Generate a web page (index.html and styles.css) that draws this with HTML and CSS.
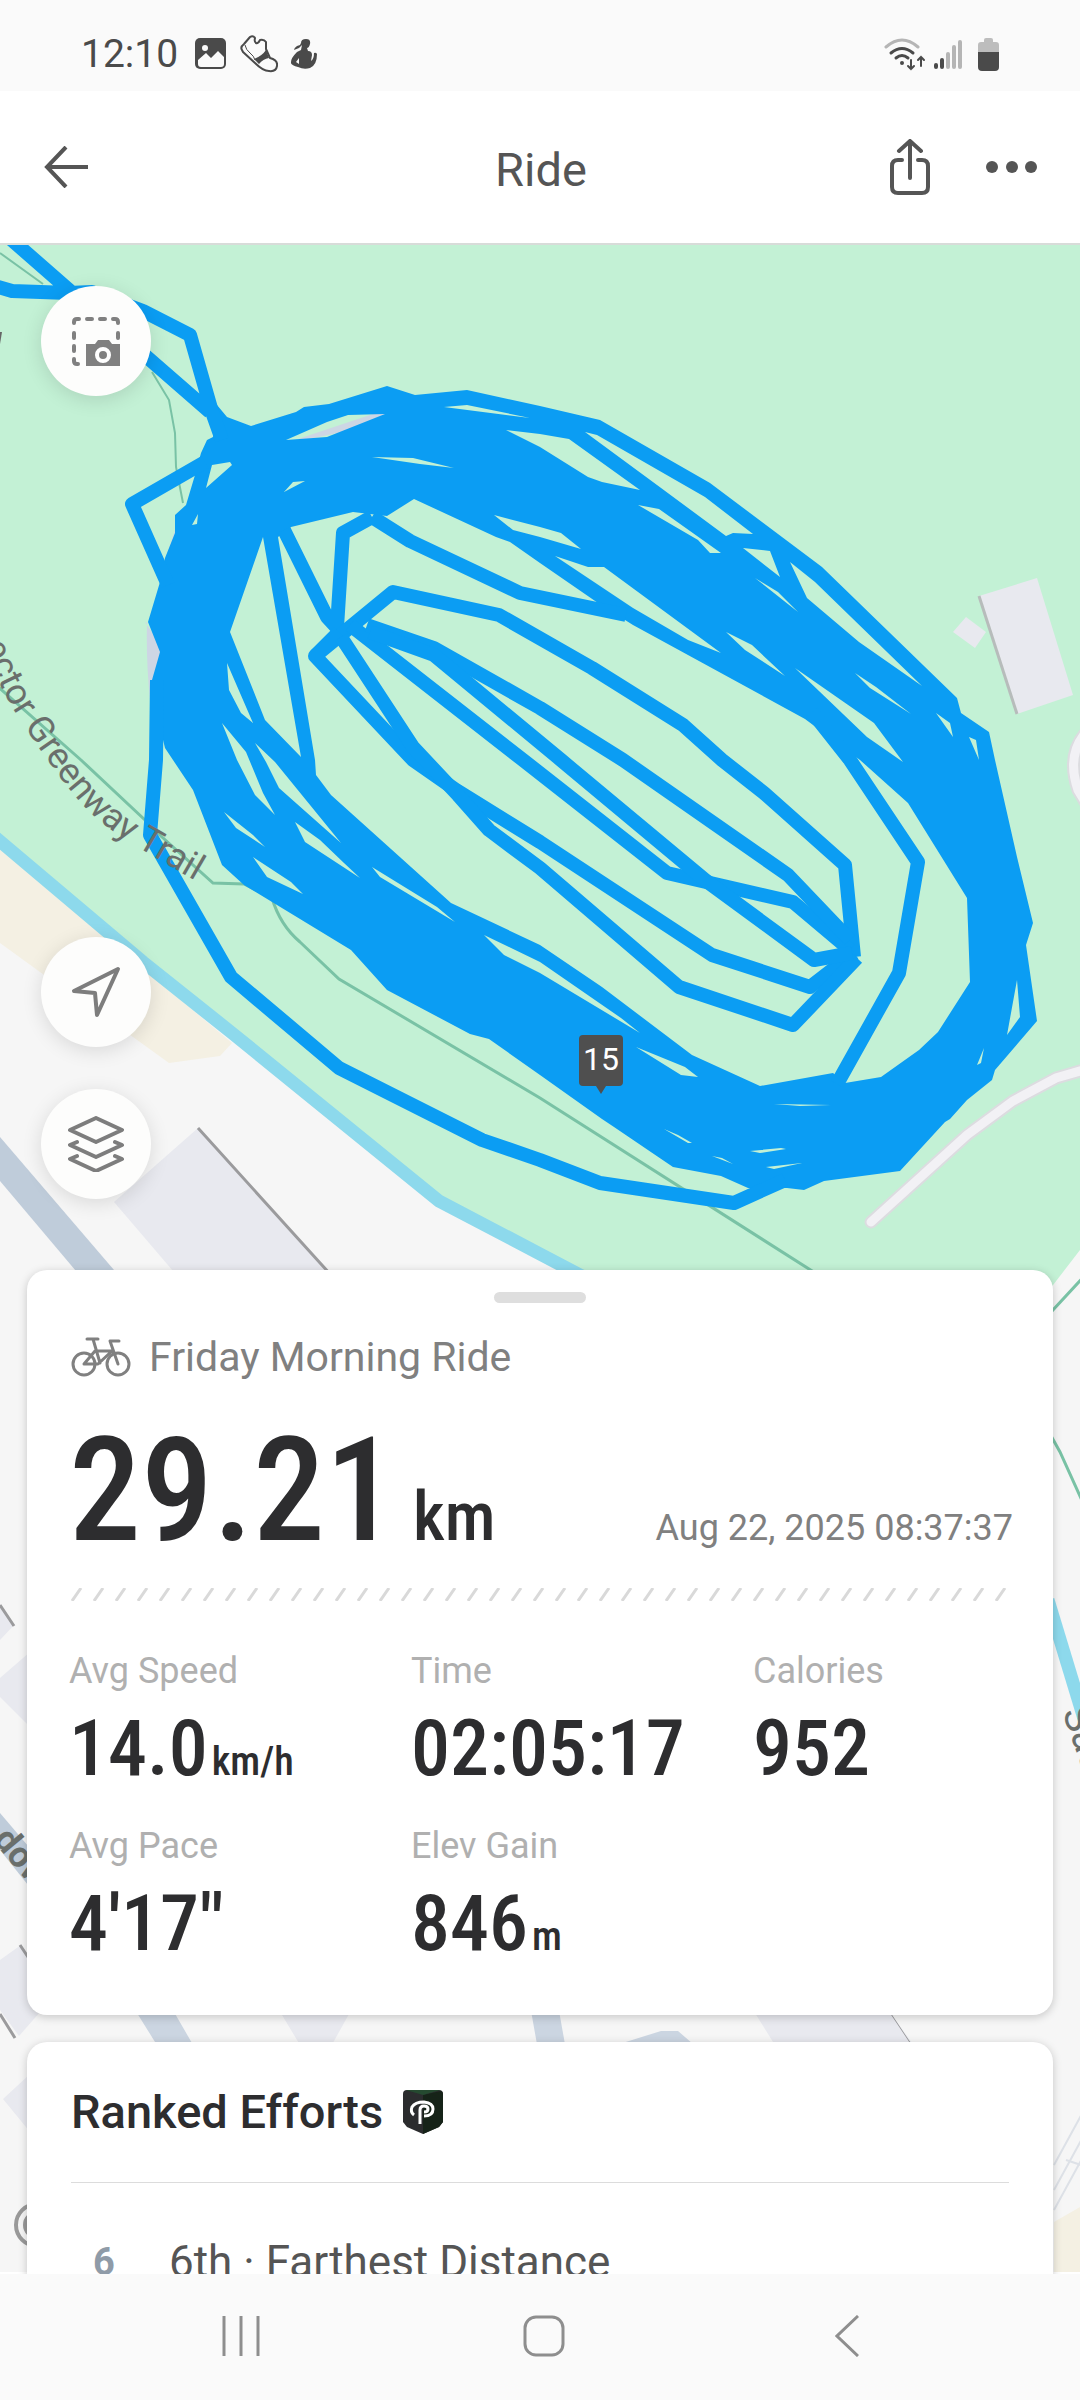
FILE: index.html
```html
<!DOCTYPE html>
<html lang="en">
<head>
  <meta charset="UTF-8" />
  <meta name="viewport" content="width=device-width, initial-scale=1.0" />
  <title>Ride</title>
  <link rel="stylesheet" href="styles.css">
</head>
<body>
  <div class="status-bar">
    <div class="status-left">
      <span class="clock">12:10</span>
      <svg width="32" height="32" viewBox="0 0 32 32">
        <rect width="31" height="31" y="0" rx="5" fill="#4a4a4a"/>
        <circle cx="10" cy="10" r="3" fill="#fafafa"/>
        <path d="M3 22l8-7 5 5 7-7 6 6v7q0 3-3 3H6q-3 0-3-3z" fill="#fafafa"/>
      </svg>
      <svg width="38" height="38" viewBox="0 0 38 38" fill="none" stroke="#4a4a4a" stroke-width="2" stroke-linejoin="round">
        <path d="M2 15q-2-3 2-6l6-7q3-2 5 1-1 4 1 5 2 1 4-3 4-1 6 2l0 7 4 9q8 2 7 8-1 6-8 5-6 0-14-8L3 17z"/>
        <path d="M5 10q1 5 5 8 4 3 5 7" stroke-width="1"/>
        <path d="M14 24q8-3 12-9l3 8q-6 1-10 6z" fill="#4a4a4a" stroke="none"/>
      </svg>
      <svg width="26" height="32" viewBox="0 0 26 32" fill="#4a4a4a">
        <path d="M10 5q0-4 5-4t4 5q-1 4-3 4l1 3q4 0 4 4l-1 6q3-2 3-8 2-1 3 1 0 11-7 14-6 2-12-1-8-2-7-5 0-4 6-10l4-2 1-5-3 3-5 2q0-2 3-4l3-1z"/>
        <path d="M5 24l3-4v6z" fill="#fafafa"/>
      </svg>
    </div>
    <div class="status-right">
      <svg width="42" height="36" viewBox="0 0 42 36" fill="none" stroke="#4a4a4a" stroke-width="3" stroke-linecap="round">
        <path d="M2 11q16-14 32 0" stroke="#b5b5b5"/>
        <path d="M7 17q11-9 22 0M12 22q6-5 12 0"/>
        <circle cx="18" cy="27" r="2" fill="#4a4a4a" stroke="none"/>
        <path d="M27 24v9m-3-3l3 3 3-3M37 30v-9m-3 3l3-3 3 3" stroke-width="2"/>
      </svg>
      <svg width="28" height="36" viewBox="0 0 28 36" stroke-width="4" stroke-linecap="round">
        <path d="M2 29v2M8 24v7" stroke="#4a4a4a"/>
        <path d="M14 18v13M20 11v20M26 6v25" stroke="#b5b5b5"/>
      </svg>
      <svg class="battery" width="21" height="36" viewBox="0 0 21 36">
        <path d="M0 16V9q0-3 3-3h3V4q0-2 2-2h5q2 0 2 2v2h3q3 0 3 3v7z" fill="#bdbdbd"/>
        <path d="M0 16h21v15q0 4-4 4H4q-4 0-4-4z" fill="#4a4a4a"/>
      </svg>
    </div>
  </div>

  <header>
    <button class="icon-btn" type="button" aria-label="Back">
      <svg width="44" height="42" viewBox="0 0 44 42" fill="none" stroke="#555" stroke-width="4"><path d="M22 1L3 21l19 20M3 21h41"/></svg>
    </button>
    <h1>Ride</h1>
    <div class="header-actions">
      <button class="icon-btn" type="button" aria-label="Share">
        <svg width="40" height="56" viewBox="0 0 40 56" fill="none" stroke="#555" stroke-width="4" stroke-linecap="round">
          <path d="M12 21H8q-6 0-6 6v21q0 6 6 6h24q6 0 6-6V27q0-6-6-6h-4M20 39V3M9 12L20 2l11 10"/>
        </svg>
      </button>
      <button class="icon-btn" type="button" aria-label="More">
        <svg width="52" height="12" viewBox="0 0 52 12" fill="#555"><circle cx="6" cy="6" r="6"/><circle cx="26" cy="6" r="6"/><circle cx="45" cy="6" r="6"/></svg>
      </button>
    </div>
  </header>

  <main>
    <svg class="map" viewBox="0 243 1080 2031" preserveAspectRatio="xMidYMin slice">
      <rect y="243" width="1080" height="2031" fill="#f6f6f6"/>

      <!-- park, sand and river -->
      <path d="M0 243H1080V1250L1030 1315H640L540 1254 439 1201 232 1033 143 962 0 841z" fill="#c3f1d5"/>
      <path d="M0 848L232 1043 220 1056 169 1063 133 1037 40 972 0 943zM1080 2207L1054 2222V2274H1080z" fill="#f4f0e3"/>
      <path d="M-5 837L143 962 232 1033 439 1201 540 1254 620 1296" fill="none" stroke="#8dd9ec" stroke-width="13"/>
      <path d="M1048 1600L1085 1722" fill="none" stroke="#8dd9ec" stroke-width="13"/>

      <!-- streets -->
      <g fill="#bfccda">
        <path d="M0 1137L114 1270 130 1290H92L0 1181z"/>
        <path d="M0 1813L40 1860V1900L0 1850z"/>
        <path d="M132 2005H170L196 2050H160zM530 2005H558L566 2050H538zM600 2050L661 2031H678L700 2050z" fill="#cbd5e1"/>
      </g>
      <path d="M871 1222L967 1135 1013 1101 1056 1078 1090 1068M1090 728Q1065 752 1078 790L1090 810" fill="none" stroke="#dcdce0" stroke-width="13" stroke-linecap="round"/>
      <path d="M871 1222L967 1135 1013 1101 1056 1078 1090 1068M1090 728Q1065 752 1078 790L1090 810" fill="none" stroke="#f2f1f5" stroke-width="9" stroke-linecap="round"/>
      <path d="M1054 2165L1084 2110M1054 2190L1084 2135M1054 2210L1084 2155M1066 2160L1084 2166" stroke="#dde1e7" stroke-width="2"/>

      <!-- buildings -->
      <g fill="#e8e9ef">
        <path d="M198 1128L340 1285H185L114 1202z"/>
        <path d="M979 596L1037 578 1073 695 1017 714zM966 617L986 632 975 648 953 632z"/>
        <path d="M0 1607L14 1625 0 1640zM0 1678L30 1652V1727L0 1697zM0 1960L21 1945 40 1975V2012L19 2036 0 2010z"/>
        <path d="M276 2005H354L329 2050H303zM750 2005H885L917 2050H778zM30 2074L3 2099 30 2132z"/>
      </g>
      <g fill="none" stroke="#9b9b9d" stroke-width="3">
        <path d="M198 1128L340 1285M0 1605L14 1626M20 1945L30 1960M0 2014L15 2038"/>
        <path d="M979 596L1017 714" stroke="#b7bcbb"/>
        <path d="M885 2005L915 2050" stroke-width="1"/>
      </g>

      <!-- walking paths -->
      <g fill="none" stroke="#79c2a5" stroke-width="3">
        <path d="M-5 684L81 760 145 820 162 837 213 883 244 884 272 898Q280 925 300 942L339 979 540 1098 820 1276"/>
        <path d="M1040 1324L1090 1270M1045 1425L1060 1452 1090 1518"/>
        <path d="M0 253L43 284M152 372L169 400 175 433 176 467 183 503" stroke-width="2"/>
      </g>

      <!-- recorded track -->
      <path d="M145 622L165 652 150 700Q146 660 147 623zM175 530L165 560 160 590 170 590zM280 445L400 405V420z" fill="#cdd6e4"/>
      <path fill="#0b9df3" fill-rule="evenodd" d="M217 405L227 417 251 426 296 412 304 407 329 404 387 386 415 395 467 390 540 406 600 420 710 483 822 567 957 698 961 713 989 732 995 760 1017 857 1033 923 1026 945 1037 1021 995 1070 992 1080 967 1100 950 1119 945 1122 900 1171 824 1181 804 1190 787 1188 748 1188 721 1176 673 1167 614 1127 602 1119 540 1075 489 1039 470 1034 387 990 351 950 244 885 222 865 193 790 165 748 150 687 160 652 148 622 160 582 165 558 175 533 175 515 186 505 195 475 201 453 207 440 213 437z
        M291 527L353 512 387 516 414 499 496 537 510 542 540 563 598 603 633 625 805 719 860 760 908 803 967 898 970 982 938 1032 919 1050 881 1077 845 1083 833 1073 760 1086 692 1055 602 987 540 945 451 903 331 795 316 775 315 760 278 537z
        M263 537L230 632 265 720 301 757z
        M227 663L229 690 241 713 253 723z
        M222 723L237 760 255 795 275 815 263 793 246 752z
        M255 743L266 762 279 788 341 843 275 762z
        M224 812L236 828 265 847 253 835z
        M253 857L267 877 303 894 291 882z
        M295 822L305 842 360 878 344 863 320 840z
        M372 867L380 877 455 922 437 907z
        M484 935L504 955 540 973 600 1009 640 1033 621 1018 540 962z
        M212 465L230 462 232 465 206 488z
        M192 525L198 514 197 524z
        M286 440L327 422 348 415 385 414 327 437z
        M284 492L293 482 305 481z
        M372 457L413 458 454 468 420 464z
        M444 407L467 405 530 418z
        M506 430L540 434 569 439 640 490 602 482 588 477 540 447z
        M585 432L597 435 705 497 753 534 733 533 726 536 657 485z
        M638 505L659 509 721 553 710 553 698 540z
        M743 548L770 551 780 577z
        M790 562L815 582 922 686 859 642 807 598z
        M755 578L778 592 798 612z
        M726 632L752 645 785 676 745 650z
        M795 668L874 723 903 762 867 737z
        M855 673L876 687 911 714 870 688z
        M936 713L950 723 953 737z
        M969 737L976 740 979 760z
        M494 515L540 527 561 533 581 549 540 537 513 530z
        M555 556L588 567 604 567 721 653 688 640 633 608z
        M1017 980L1020 1017 1007 1035z
        M636 1047L681 1075 698 1077 685 1067z
        M750 1151L781 1148 786 1149 760 1153z
        M766 1167L802 1163 774 1169z
        M664 1129L688 1143 692 1143 678 1135z
        M774 1104L831 1105 800 1106z
        M712 1156L733 1164 722 1158z
        M984 1048L981 1063 977 1065z"/>
      <g fill="none" stroke="#0b9df3" stroke-width="14" stroke-linejoin="round">
        <!-- way in from the north-west -->
        <path d="M5 234L69 290 148 358 210 412M-5 286L12 291 69 293 92 292 143 311 190 335 212 412 222 440"/>
        <!-- wide laps -->
        <path d="M205 462L132 504 168 585"/>
        <path d="M157 680L156 760 150 835 231 977 339 1068 482 1140 540 1160 600 1183 734 1203 785 1180"/>
        <path d="M812 712L850 760 918 862 899 973 837 1084"/>
        <path d="M372 517L410 541 520 593 626 615"/>
        <!-- inner laps -->
        <path d="M284 530L327 617 339 630M372 517L343 533 337 627"/>
        <path d="M315 656L393 592 499 615 592 668 683 725 722 760 764 793 845 865 854 957"/>
        <path d="M339 632L315 656 413 760 456 790 540 842 712 955 810 987 854 953"/>
        <path d="M341 637L413 747 458 795 489 830 540 868 679 987 793 1025 857 958"/>
        <path d="M350 625L523 760 667 873 793 902 850 950"/>
        <path d="M367 625L434 648 540 708 623 760 788 875 850 940"/>
        <path d="M370 632L434 655 561 760 705 880 814 960 852 953"/>
      </g>

      <path id="trail" d="M-50 540Q-16 664 17 715T75 796 139 848L199 883" fill="none"/>
      <g class="map-label">
        <text text-anchor="end"><textPath href="#trail" startOffset="99%">nnector Greenway Trail</textPath></text>
        <text class="river" transform="translate(1062 1712) rotate(70)">Sau</text>
        <text class="street" transform="translate(-8 1840) rotate(50)">dow</text>
      </g>
      <path d="M0 332L2 332 0 344z" fill="#666"/>
      <g fill="none" stroke="#999" stroke-width="4"><circle cx="37" cy="2225" r="21"/><circle cx="37" cy="2225" r="12"/></g>

      <!-- distance marker -->
      <path d="M583 1035h36q4 0 4 4v43q0 4-4 4h-13l-5 8-5-8h-13q-4 0-4-4v-43q0-4 4-4z" fill="#4f4f4f"/>
      <text class="marker" x="601" y="1070" text-anchor="middle">15</text>
    </svg>

    <div class="map-controls">
      <button class="round-btn snapshot" type="button" aria-label="Snapshot">
        <svg width="50" height="50" viewBox="0 0 50 50" fill="none" stroke="#808080" stroke-width="4" stroke-linecap="round">
          <path d="M3 7V6q0-3 3-3h2M16 3h5M29 3h5M42 3h2q3 0 3 3v1M3 17v5M3 30v5M3 43v2q0 3 3 3h1M47 17v5"/>
          <path d="M15 28h9l3-4h11l3 4h8v22H15z" fill="#808080" stroke="none"/>
          <circle cx="32" cy="39" r="6" fill="#808080" stroke="#fff"/>
        </svg>
      </button>
      <button class="round-btn" type="button" aria-label="Locate me">
        <svg width="50" height="52" viewBox="0 0 50 52" fill="none" stroke="#7d7d7d" stroke-width="4" stroke-linejoin="round"><path d="M47 3L3 25l21 2 2 22z"/></svg>
      </button>
      <button class="round-btn" type="button" aria-label="Map layers">
        <svg width="56" height="56" viewBox="0 0 56 56" fill="none" stroke="#7d7d7d" stroke-width="4" stroke-linejoin="round" stroke-linecap="round">
          <path d="M28 2l26 12-26 12L2 14zM9 26l-7 3 26 12 26-12-7-3M9 40l-7 3 26 12 26-12-7-3"/>
        </svg>
      </button>
    </div>

    <section class="card summary">
      <div class="handle"></div>
      <div class="activity">
        <svg width="60" height="42" viewBox="0 0 60 42" fill="none" stroke="#808080" stroke-width="3" stroke-linecap="round" stroke-linejoin="round">
          <circle cx="13" cy="28" r="11"/><circle cx="47" cy="28" r="11"/>
          <path d="M16 3h11M22 3l7 24M13 28h14l14-13H24l-11 13M39 5h9M39 5l8 23"/>
        </svg>
        <h2>Friday Morning Ride</h2>
      </div>
      <div class="total">
        <div class="distance">29.21<small>km</small></div>
        <time datetime="2025-08-22T08:37:37">Aug 22, 2025 08:37:37</time>
      </div>
      <svg class="slashes" width="100%" height="13">
        <pattern id="slash" width="22" height="13" patternUnits="userSpaceOnUse"><path d="M1 13L10 0" stroke="#d9d9d9" stroke-width="3"/></pattern>
        <rect width="100%" height="13" fill="url(#slash)"/>
      </svg>
      <dl class="stats">
        <div><dt>Avg Speed</dt><dd>14.0<small>km/h</small></dd></div>
        <div><dt>Time</dt><dd>02:05:17</dd></div>
        <div><dt>Calories</dt><dd>952</dd></div>
        <div><dt>Avg Pace</dt><dd>4'17"</dd></div>
        <div><dt>Elev Gain</dt><dd>846<small>m</small></dd></div>
      </dl>
    </section>

    <section class="card efforts">
      <h3>Ranked Efforts
        <svg width="40" height="44" viewBox="0 0 40 44">
          <path d="M4 0h32q4 0 4 4v28l-4 5-16 7-16-7-4-5V4q0-4 4-4z" fill="#2b2c2e"/>
          <path d="M20 5L38 1q2 1 2 3v28l-4 5-16 7z" fill="#162318"/>
          <path d="M3 0h34L20 5z" fill="#254a30"/>
          <path d="M17 34V20q0-4 4-4 4 0 4 3t-4 3M11 25q-4-3-2-8 3-5 12-5 9 1 9 7 0 7-9 7" fill="none" stroke="#fff" stroke-width="3"/>
        </svg>
      </h3>
      <ol>
        <li><b>6</b>6th · Farthest Distance</li>
      </ol>
    </section>
  </main>

  <nav>
    <button type="button" aria-label="Recents">
      <svg width="42" height="42" viewBox="0 0 42 42" stroke="#8e8e8e" stroke-width="3"><path d="M4 1v40M21 1v40M38 1v40"/></svg>
    </button>
    <button type="button" aria-label="Home">
      <svg width="42" height="42" viewBox="0 0 42 42" fill="none" stroke="#8e8e8e" stroke-width="3"><rect x="2" y="2" width="38" height="38" rx="11"/></svg>
    </button>
    <button type="button" aria-label="Back">
      <svg width="24" height="42" viewBox="0 0 24 42" fill="none" stroke="#8e8e8e" stroke-width="3"><path d="M23 1L2 21l21 20"/></svg>
    </button>
  </nav>
</body>
</html>
```

FILE: styles.css
```css
* {
  box-sizing: border-box;
}
body {
  margin: 0;
  height: 100vh;
  display: flex;
  flex-direction: column;
  font-family: Roboto, "Liberation Sans", sans-serif;
  background-color: #ffffff;
  color: #2d2d2f;
}
h1, h2, h3, dl, dd, ol {
  margin: 0;
  padding: 0;
}
svg {
  display: block;
  flex: none;
}
button {
  padding: 0;
  border: none;
  background: none;
  cursor: pointer;
}
small {
  line-height: 1;
}
.status-bar {
  display: flex;
  justify-content: space-between;
  align-items: center;
  flex: none;
  padding: 17px 81px 0 81px;
  height: 91px;
  background-color: #fafafa;
}
.status-left, .status-right {
  display: flex;
  align-items: center;
  gap: 13px;
}
.status-right {
  gap: 8px;
}
.battery {
  margin-left: 8px;
}
.clock {
  font-size: 39px;
  color: #4a4a4a;
  margin-right: 4px;
}
header {
  display: grid;
  grid-template-columns: 1fr auto 1fr;
  align-items: center;
  flex: none;
  height: 152px;
  padding: 0 42px 0 44px;
}
h1 {
  font-size: 47px;
  font-weight: 400;
  color: #555;
  padding-top: 4px;
}
.icon-btn {
  display: flex;
  width: fit-content;
}
.header-actions {
  display: flex;
  justify-content: flex-end;
  align-items: center;
  gap: 56px;
}
main {
  position: relative;
  flex: 1;
  min-height: 0;
  overflow: hidden;
  padding: 0 27px;
  border-top: 2px solid #d8dcd9;
}
.map {
  position: absolute;
  top: -2px;
  left: 0;
  width: 100%;
  height: 100%;
  z-index: -1;
}
.map-label {
  font-size: 36px;
  fill: #6a6f6c;
}
.map-label .street {
  font-weight: 700;
}
.map-label .river {
  font-size: 40px;
}
.marker {
  font-size: 32px;
  fill: #ffffff;
}
.map-controls {
  display: flex;
  flex-direction: column;
  gap: 42px;
  padding: 41px 14px 71px;
}
.round-btn {
  display: flex;
  align-items: center;
  justify-content: center;
  width: 110px;
  height: 110px;
  border-radius: 50%;
  background-color: #fdfdfc;
  box-shadow: 0 4px 20px rgba(0, 0, 0, 0.12);
}
.snapshot {
  margin-bottom: 499px;
}
.card {
  background-color: #ffffff;
  border-radius: 20px;
  box-shadow: 0 2px 10px rgba(0, 0, 0, 0.2);
  margin-bottom: 27px;
}
.summary {
  padding: 22px 0 45px;
}
.handle {
  width: 92px;
  height: 11px;
  margin: 0 auto;
  border-radius: 6px;
  background-color: #dedede;
}
.activity {
  display: flex;
  align-items: center;
  gap: 18px;
  margin: 30px 44px 26px;
}
h2 {
  font-size: 41px;
  line-height: 48px;
  font-weight: 400;
  color: #808080;
}
.total {
  display: flex;
  align-items: baseline;
  justify-content: space-between;
  padding: 0 40px 0 42px;
}
.distance, dd {
  font-family: "Roboto Condensed", Roboto, "Liberation Sans Narrow", sans-serif;
  font-weight: 500;
}
.distance {
  font-size: 144px;
  line-height: 168px;
}
.distance small {
  font-size: 68px;
  margin-left: 16px;
}
time {
  font-size: 36px;
  color: #808080;
}
.slashes {
  margin: 13px 0 0;
  padding: 0 44px;
}
.stats {
  display: grid;
  grid-template-columns: repeat(3, 1fr);
  row-gap: 29px;
  margin-top: 48px;
}
.stats div {
  padding-left: 42px;
}
dt {
  font-size: 36px;
  line-height: 44px;
  color: #b0b0b0;
  margin-bottom: 10px;
}
dd {
  font-size: 78px;
  line-height: 92px;
  white-space: nowrap;
}
dd small {
  font-size: 40px;
  margin-left: 4px;
}
.efforts {
  padding: 43px 44px;
}
h3 {
  display: flex;
  align-items: center;
  gap: 20px;
  font-size: 47px;
  line-height: 54px;
  font-weight: 500;
  padding-bottom: 43px;
  border-bottom: 1px solid #dcdcdc;
}
li {
  display: flex;
  align-items: center;
  padding: 54px 0 44px;
  font-size: 44px;
  line-height: 50px;
  color: #555;
}
li b {
  width: 98px;
  padding-left: 22px;
  font-size: 38px;
  color: #8f9ba8;
}
nav {
  display: grid;
  grid-template-columns: repeat(3, 1fr);
  flex: none;
  height: 126px;
  padding: 0 82px 2px 89px;
  background-color: #fafafa;
}
nav button {
  display: flex;
  align-items: center;
  justify-content: center;
}
```
